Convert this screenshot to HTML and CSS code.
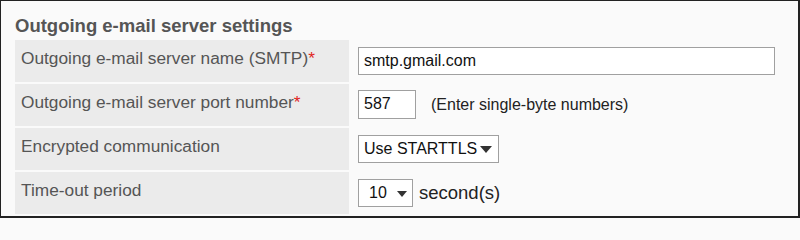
FILE: index.html
```html
<!DOCTYPE html>
<html>
<head>
<meta charset="utf-8">
<link rel="stylesheet" href="styles.css">
</head>
<body>
<div class="frame">
  <h2 class="title">Outgoing e-mail server settings</h2>
  <div class="form">
    <div class="row">
      <div class="label">Outgoing e-mail server name (SMTP)<span class="req">*</span></div>
      <div class="value"><div class="input wide">smtp.gmail.com</div></div>
    </div>
    <div class="row">
      <div class="label">Outgoing e-mail server port number<span class="req">*</span></div>
      <div class="value"><div class="input port">587</div><span class="note">(Enter single-byte numbers)</span></div>
    </div>
    <div class="row">
      <div class="label">Encrypted communication</div>
      <div class="value"><div class="select tls">Use STARTTLS<span class="caret"></span></div></div>
    </div>
    <div class="row">
      <div class="label">Time-out period</div>
      <div class="value"><div class="select timeout">10<span class="caret"></span></div><span class="unit">second(s)</span></div>
    </div>
  </div>
</div>
</body>
</html>
```
FILE: styles.css
```css
html, body {
  margin: 0;
  padding: 0;
  background: #fafafa;
}
.frame {
  box-sizing: border-box;
  width: 800px;
  height: 218px;
  border-style: solid;
  border-color: #222;
  border-width: 1px 2px 2px 1px;
  background: #fafafa;
  padding: 15px 0 0 14px;
  font-family: "Liberation Sans", Arial, sans-serif;
  color: #555;
}
.title {
  margin: 0;
  font-size: 18.5px;
  font-weight: bold;
  line-height: 20px;
  height: 24px;
  color: #555;
}
.form {
  display: flex;
  flex-direction: column;
  gap: 2px;
}
.row {
  display: flex;
  height: 42px;
}
.label {
  box-sizing: border-box;
  width: 334px;
  background: #ebebeb;
  padding: 8px 0 0 6px;
  font-size: 17.3px;
  line-height: 20px;
  color: #555;
}
.req {
  color: #e0241c;
}
.value {
  display: flex;
  align-items: center;
  padding-left: 9px;
  padding-bottom: 1px;
  gap: 15px;
}
.input {
  box-sizing: border-box;
  height: 28px;
  border: 1px solid #a0a0a0;
  background: #fff;
  font-size: 16px;
  line-height: 26px;
  color: #111;
  padding-left: 5px;
}
.wide {
  width: 417px;
}
.port {
  width: 58px;
  height: 29px;
}
.note {
  font-size: 16px;
  color: #222;
}
.select {
  box-sizing: border-box;
  height: 28px;
  border: 1px solid #a0a0a0;
  background: #fff;
  font-size: 16px;
  line-height: 26px;
  color: #111;
  display: flex;
  align-items: center;
}
.tls {
  width: 141px;
  padding-left: 5px;
}
.timeout {
  width: 55px;
  padding-left: 10px;
}
.caret {
  width: 0;
  height: 0;
  border-left: 6px solid transparent;
  border-right: 6px solid transparent;
  border-top: 7px solid #333;
  margin-left: 3px;
  margin-top: 2px;
}
.timeout .caret {
  margin-left: 10px;
  border-left-width: 5px;
  border-right-width: 5px;
  border-top-width: 6px;
}
.unit {
  font-size: 18.5px;
  color: #222;
  margin-left: -9px;
}
```
